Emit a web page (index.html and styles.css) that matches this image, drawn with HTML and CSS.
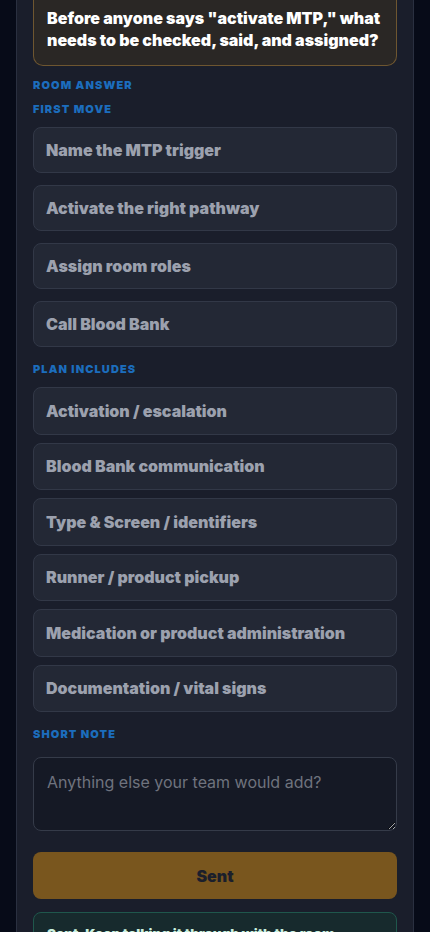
FILE: index.html
```html
<!DOCTYPE html>
<html lang="en">
<head>
<meta charset="utf-8">
<title>MTP Room Answer</title>
<link rel="stylesheet" href="styles.css">
</head>
<body>
<main class="panel">
  <div class="question">Before anyone says "activate MTP," what needs to be checked, said, and assigned?</div>
  <div class="label label-room">ROOM ANSWER</div>
  <div class="label label-first">FIRST MOVE</div>
  <div class="group group-first">
    <button class="opt">Name the MTP trigger</button>
    <button class="opt">Activate the right pathway</button>
    <button class="opt">Assign room roles</button>
    <button class="opt">Call Blood Bank</button>
  </div>
  <div class="label label-plan">PLAN INCLUDES</div>
  <div class="group group-plan">
    <button class="opt opt-plan">Activation / escalation</button>
    <button class="opt opt-plan">Blood Bank communication</button>
    <button class="opt opt-plan">Type &amp; Screen / identifiers</button>
    <button class="opt opt-plan">Runner / product pickup</button>
    <button class="opt opt-plan">Medication or product administration</button>
    <button class="opt opt-plan">Documentation / vital signs</button>
  </div>
  <div class="label label-note">SHORT NOTE</div>
  <textarea class="note" placeholder="Anything else your team would add?"></textarea>
  <button class="sent">Sent</button>
  <div class="status">Sent. Keep talking it through with the room.</div>
</main>
</body>
</html>
```
FILE: styles.css
```css
html, body {
  margin: 0;
  padding: 0;
  background: #070b18;
  overflow: hidden;
  height: 932px;
}
body {
  font-family: Inter, "Noto Sans", sans-serif;
}
.panel {
  margin: -40px 16px 0 16px;
  background: #1a1e2b;
  border: 1px solid #2a3040;
  border-top: none;
  padding: 0 16px 40px 16px;
  display: flex;
  flex-direction: column;
}
.question {
  background: #2a2725;
  border: 1px solid #6e5630;
  border-top: none;
  border-radius: 0 0 10px 10px;
  padding: 47px 13px 14px 13px;
  color: #ffffff;
  font-size: 16px;
  font-weight: 900;
  line-height: 22px;
}
.label {
  color: #1c6dbd;
  font-size: 11px;
  font-weight: 900;
  letter-spacing: 1.1px;
  line-height: 14px;
}
.label-room { margin-top: 12px; }
.label-first { margin-top: 10px; }
.label-plan { margin-top: 15px; }
.label-note { margin-top: 15px; }
.group {
  display: flex;
  flex-direction: column;
}
.group-first {
  margin-top: 11px;
  gap: 12px;
}
.group-plan {
  margin-top: 11px;
  gap: 8px;
}
.opt {
  height: 46px;
  background: #232835;
  border: 1px solid #323847;
  border-radius: 8px;
  color: #9ca1ae;
  font-family: Inter, "Noto Sans", sans-serif;
  font-size: 16px;
  font-weight: 900;
  text-align: left;
  padding: 0 12px;
  margin: 0;
}
.opt-plan {
  height: 47.5px;
}
.note {
  margin-top: 16px;
  height: 74px;
  box-sizing: border-box;
  background: #151925;
  border: 1px solid #353b49;
  border-radius: 8px;
  color: #d0d3da;
  font-family: Inter, "Noto Sans", sans-serif;
  font-size: 16px;
  padding: 14px 13px;
  resize: vertical;
}
.note::placeholder {
  color: #6f737e;
}
.sent {
  margin-top: 21px;
  height: 47px;
  background: #79561e;
  border: none;
  border-radius: 8px;
  color: #1b1f2b;
  font-family: Inter, "Noto Sans", sans-serif;
  font-size: 16px;
  font-weight: 900;
}
.status {
  margin-top: 13px;
  background: #172a2d;
  border: 1px solid #1f574c;
  border-radius: 8px;
  padding: 11px 13px;
  color: #c9efdf;
  font-size: 13.5px;
  font-weight: 900;
  line-height: 20px;
}
```
